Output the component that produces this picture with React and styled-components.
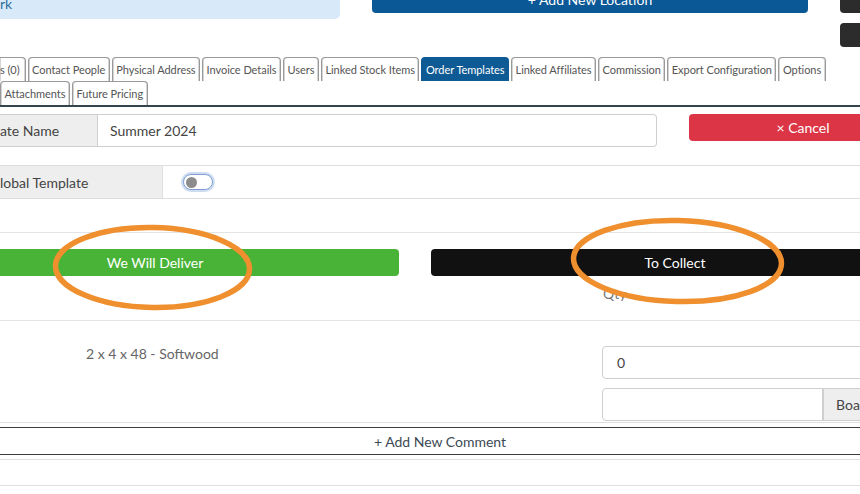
import React from "react";
import styled, { createGlobalStyle } from "styled-components";

const Global = createGlobalStyle`
  html, body { margin: 0; padding: 0; background: #fff; }
  body { font-family: Lato, "Open Sans", sans-serif; overflow: hidden; }
  * { box-sizing: border-box; }
`;

const Page = styled.div`
  position: relative;
  width: 860px;
  height: 494px;
  overflow: hidden;
  color: #444;
`;

const TopBar = styled.div`
  display: flex;
  align-items: flex-start;
  margin-top: -14px;
  height: 71px;
`;

const InfoBox = styled.div`
  flex: none;
  width: 340px;
  height: 33px;
  background: #d8eafa;
  border-bottom-right-radius: 5px;
  color: #2f6e9c;
  font-size: 14px;
  display: flex;
  align-items: center;
  padding-top: 2px;
`;

const PrimaryButton = styled.div`
  flex: none;
  margin-left: 32px;
  width: 436px;
  height: 27px;
  background: #0b5896;
  border-radius: 4px;
  color: #fff;
  font-size: 14px;
  display: flex;
  align-items: center;
  justify-content: center;
`;

const DarkStack = styled.div`
  flex: none;
  margin-left: 32px;
  display: flex;
  flex-direction: column;
  gap: 10px;
`;

const DarkButton = styled.div`
  width: 40px;
  height: ${(p) => p.$h}px;
  background: #2c2c2c;
  border-radius: 4px;
`;

const TabList = styled.div`
  display: flex;
  flex-direction: column;
  border-bottom: 2px solid #34444e;
`;

const TabRow = styled.div`
  display: flex;
  gap: 2px;
  height: 24px;
`;

const Tab = styled.div`
  flex: none;
  height: 24px;
  padding: ${(p) => (p.$cut ? "0 5px 0 0" : "0 3.5px")};
  display: flex;
  align-items: center;
  font-size: 11px;
  letter-spacing: -0.05px;
  color: ${(p) => (p.$active ? "#fff" : "#555")};
  background: ${(p) => (p.$active ? "#0e5a94" : "#fff")};
  border: 1px solid ${(p) => (p.$active ? "#0e5a94" : "#9a9a9a")};
  border-bottom: none;
  border-left: ${(p) => (p.$cut ? "none" : undefined)};
  border-radius: ${(p) => (p.$cut ? "0 4px 0 0" : "4px 4px 0 0")};
  box-shadow: ${(p) =>
    p.$active ? "none" : "inset 1px 0 0 #d4d4d4, inset -1px 0 0 #d4d4d4"};
  white-space: nowrap;
`;

const FormRow = styled.div`
  display: flex;
  align-items: flex-start;
  margin-top: 7px;
`;

const InputGroup = styled.div`
  flex: none;
  display: flex;
  width: ${(p) => p.$w}px;
  height: 33px;
`;

const Addon = styled.div`
  width: ${(p) => (p.$w ? `${p.$w}px` : "auto")};
  flex: ${(p) => (p.$w ? "none" : "1")};
  background: #eeeeee;
  border: 1px solid #cfcfcf;
  border-left: ${(p) => (p.$cut ? "none" : "1px solid #cfcfcf")};
  display: flex;
  align-items: center;
  padding-left: ${(p) => (p.$cut ? "0" : "12px")};
  font-size: 14px;
  color: #444;
  white-space: nowrap;
  overflow: hidden;
`;

const TextInput = styled.div`
  flex: ${(p) => (p.$w ? "none" : "1")};
  width: ${(p) => (p.$w ? `${p.$w}px` : "auto")};
  border: 1px solid #cfcfcf;
  border-left: ${(p) => (p.$joined ? "none" : "1px solid #cfcfcf")};
  border-radius: ${(p) => p.$radius || "0 4px 4px 0"};
  display: flex;
  align-items: center;
  padding-left: ${(p) => p.$pad || 12}px;
  font-size: 14px;
  color: #444;
  height: 33px;
`;

const CancelButton = styled.div`
  flex: none;
  margin-left: 32px;
  width: 228px;
  height: 27px;
  background: #dc3545;
  border-radius: 4px;
  color: #fff;
  font-size: 14px;
  display: flex;
  align-items: center;
  justify-content: center;
`;

const TableRow = styled.div`
  display: flex;
  height: 34px;
  margin-top: 18px;
  border-top: 1px solid #dedede;
  border-bottom: 1px solid #dedede;
`;

const LabelCell = styled.div`
  flex: none;
  width: 163px;
  background: #eeeeee;
  border-right: 1px solid #dedede;
  display: flex;
  align-items: center;
  font-size: 14px;
  color: #444;
`;

const ToggleCell = styled.div`
  display: flex;
  align-items: center;
  padding-left: 20px;
`;

const Toggle = styled.div`
  width: 30px;
  height: 16px;
  border-radius: 8px;
  border: 1px solid #7f9fcf;
  box-shadow: 0 0 0 2px rgba(80, 130, 210, 0.28);
  background: #fff;
  display: flex;
  align-items: center;
  padding-left: 2px;
`;

const Knob = styled.div`
  width: 11px;
  height: 11px;
  border-radius: 50%;
  background: #8c8c8c;
`;

const Section = styled.div`
  margin-top: 33px;
  border-top: 1px solid #e4e4e4;
  padding-top: 16px;
`;

const ChoiceRow = styled.div`
  display: flex;
  height: 27px;
`;

const ChoiceButton = styled.div`
  flex: none;
  width: 488px;
  margin-left: ${(p) => p.$ml}px;
  background: ${(p) => p.$bg};
  border-radius: 4px;
  color: #fff;
  font-size: 14px;
  display: flex;
  align-items: center;
  justify-content: center;
`;

const HeaderRow = styled.div`
  display: flex;
  height: 45px;
  align-items: flex-start;
  padding-top: 9px;
  border-bottom: 1px solid #e4e4e4;
  padding-left: 603px;
  font-size: 14px;
  color: #777;
`;

const ItemRow = styled.div`
  display: flex;
  height: 102px;
  border-bottom: 1px solid #e0e0e0;
`;

const ItemName = styled.div`
  flex: none;
  width: 602px;
  padding-left: 86px;
  padding-top: 24px;
  font-size: 14px;
  color: #666;
`;

const ItemInputs = styled.div`
  flex: none;
  display: flex;
  flex-direction: column;
  gap: 9px;
  padding-top: 25px;
`;

const CommentBar = styled.div`
  margin-top: 4px;
  height: 28px;
  border-top: 1px solid #3c3c3c;
  border-bottom: 1px solid #3c3c3c;
  display: flex;
  align-items: center;
  justify-content: center;
  padding-left: 20px;
  font-size: 14px;
  color: #3d4a55;
`;

const Rule = styled.div`
  margin-top: ${(p) => p.$mt}px;
  border-top: 1px solid #e0e0e0;
`;

const Annotations = styled.svg`
  position: absolute;
  left: 0;
  top: 0;
  pointer-events: none;
`;

const tabsRow1 = [
  "s (0)",
  "Contact People",
  "Physical Address",
  "Invoice Details",
  "Users",
  "Linked Stock Items",
  "Order Templates",
  "Linked Affiliates",
  "Commission",
  "Export Configuration",
  "Options",
];
const tabsRow2 = ["Attachments", "Future Pricing"];

export default function App() {
  return (
    <Page>
      <Global />
      <TopBar>
        <InfoBox>rk</InfoBox>
        <PrimaryButton>+ Add New Location</PrimaryButton>
        <DarkStack>
          <DarkButton $h={27} />
          <DarkButton $h={24} />
        </DarkStack>
      </TopBar>

      <TabList>
        <TabRow>
          {tabsRow1.map((t, i) => (
            <Tab key={t} $cut={i === 0} $active={t === "Order Templates"}>
              {t}
            </Tab>
          ))}
        </TabRow>
        <TabRow>
          {tabsRow2.map((t) => (
            <Tab key={t}>{t}</Tab>
          ))}
        </TabRow>
      </TabList>

      <FormRow>
        <InputGroup $w={657}>
          <Addon $w={98} $cut>
            ate Name
          </Addon>
          <TextInput $joined>Summer 2024</TextInput>
        </InputGroup>
        <CancelButton>× Cancel</CancelButton>
      </FormRow>

      <TableRow>
        <LabelCell>lobal Template</LabelCell>
        <ToggleCell>
          <Toggle>
            <Knob />
          </Toggle>
        </ToggleCell>
      </TableRow>

      <Section>
        <ChoiceRow>
          <ChoiceButton $ml={-89} $bg="#49b337">
            We Will Deliver
          </ChoiceButton>
          <ChoiceButton $ml={32} $bg="#111111">
            To Collect
          </ChoiceButton>
        </ChoiceRow>
      </Section>

      <HeaderRow>Qty</HeaderRow>

      <ItemRow>
        <ItemName>2 x 4 x 48 - Softwood</ItemName>
        <ItemInputs>
          <TextInput $w={300} $radius="4px 0 0 4px" $pad={14}>
            0
          </TextInput>
          <InputGroup $w={300}>
            <TextInput $w={221} $radius="4px 0 0 4px">
              {""}
            </TextInput>
            <Addon>Boards</Addon>
          </InputGroup>
        </ItemInputs>
      </ItemRow>

      <CommentBar>+ Add New Comment</CommentBar>
      <Rule $mt={4} />
      <Rule $mt={25} />

      <Annotations width="860" height="494" viewBox="0 0 860 494">
        <ellipse
          cx="152.5"
          cy="267.5"
          rx="97"
          ry="40"
          fill="none"
          stroke="#ef8f2e"
          strokeWidth="5.5"
          transform="rotate(1 152.5 267.5)"
        />
        <ellipse
          cx="677.5"
          cy="261"
          rx="104"
          ry="40.5"
          fill="none"
          stroke="#ef8f2e"
          strokeWidth="5.5"
          transform="rotate(1.5 677.5 261)"
        />
      </Annotations>
    </Page>
  );
}
